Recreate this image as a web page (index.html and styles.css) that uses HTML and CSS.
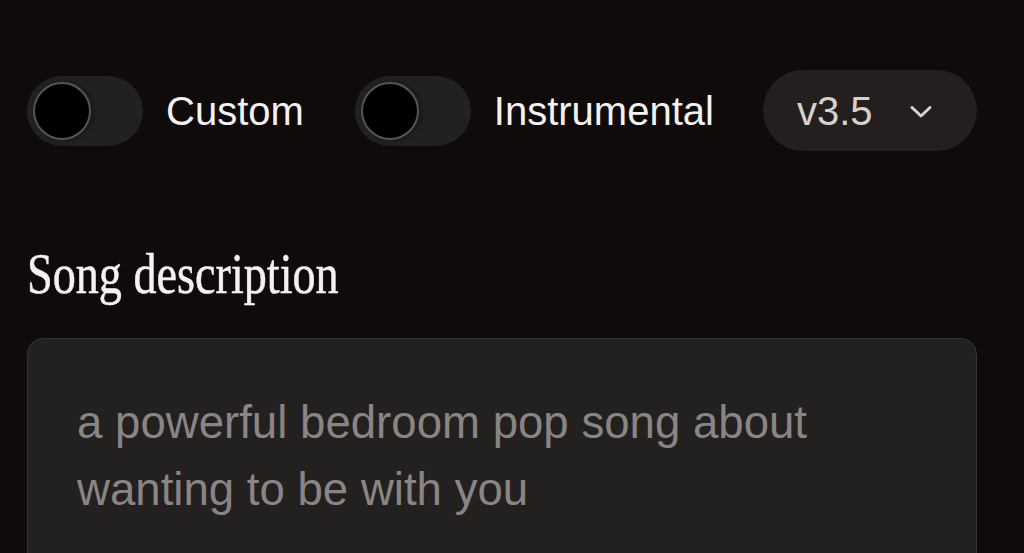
FILE: index.html
```html
<!DOCTYPE html>
<html lang="en">
<head>
<meta charset="utf-8">
<title>Create song</title>
<link rel="stylesheet" href="styles.css">
</head>
<body>
<main class="panel">
  <div class="controls">
    <label class="switch-group">
      <span class="switch"><span class="knob"></span></span>
      <span class="switch-label">Custom</span>
    </label>
    <label class="switch-group">
      <span class="switch"><span class="knob"></span></span>
      <span class="switch-label">Instrumental</span>
    </label>
    <button class="version" type="button">
      <span class="version-text">v3.5</span>
      <svg class="chevron" width="24" height="14" viewBox="0 0 24 14" aria-hidden="true">
        <path d="M3 2.5 L12 11 L21 2.5" fill="none" stroke="currentColor" stroke-width="3" stroke-linecap="round" stroke-linejoin="round"/>
      </svg>
    </button>
  </div>
  <h2 class="section-title"><span class="title-text">Song description</span></h2>
  <div class="description">
    <p class="placeholder">a powerful bedroom pop song about wanting to be with you</p>
  </div>
</main>
</body>
</html>
```
FILE: styles.css
```css
html, body {
  margin: 0;
  padding: 0;
  background: #0f0b0b;
}

body {
  font-family: "Liberation Sans", Arial, sans-serif;
  overflow: hidden;
  height: 553px;
}

.panel {
  width: 950px;
  padding: 70px 0 0 27px;
}

.controls {
  display: flex;
  align-items: center;
  height: 81px;
  gap: 51px;
}

.switch-group {
  display: flex;
  align-items: center;
  flex-shrink: 0;
  gap: 23px;
}

.switch {
  flex-shrink: 0;
  width: 116px;
  height: 70px;
  border-radius: 35px;
  background: #222020;
  display: flex;
  align-items: center;
  padding-left: 6px;
  box-sizing: border-box;
}

.knob {
  width: 58px;
  height: 58px;
  box-sizing: border-box;
  border-radius: 50%;
  background: #000;
  border: 2px solid #575454;
  box-shadow: 2px 0 6px rgba(0, 0, 0, 0.35);
}

.switch-label {
  color: #f4f2f0;
  font-size: 40px;
  line-height: 1;
}

.version {
  flex-shrink: 0;
  display: flex;
  align-items: center;
  height: 81px;
  width: 214px;
  box-sizing: border-box;
  padding: 0 0 0 34px;
  border: none;
  border-radius: 41px;
  background: #231f1f;
  color: #d6d1cd;
  font-family: inherit;
  margin-left: -2px;
}

.version-text {
  font-size: 40px;
  line-height: 1;
}

.chevron {
  margin-left: 36px;
  margin-top: 2px;
}

.section-title {
  margin: 94px 0 0 0;
  height: 57px;
  font-family: "Liberation Serif", "Times New Roman", serif;
  font-weight: 400;
  font-size: 57px;
  line-height: 57px;
  color: #f4f2f0;
  white-space: nowrap;
}

.title-text {
  display: inline-block;
  transform: scaleX(0.81);
  transform-origin: 0 50%;
  -webkit-text-stroke: 0.5px #f4f2f0;
}

.description {
  margin-top: 36px;
  height: 260px;
  box-sizing: border-box;
  background: #232020;
  border: 1px solid #363232;
  border-radius: 16px;
  padding: 50px 48px 0 49px;
}

.placeholder {
  margin: 0;
  color: #8a8583;
  font-size: 45.6px;
  line-height: 67px;
}
```
